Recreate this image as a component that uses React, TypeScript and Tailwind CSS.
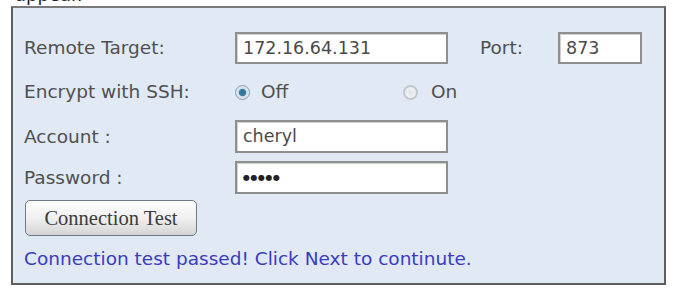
import React from "react";

const font = { fontFamily: '"DejaVu Sans", Verdana, sans-serif' };

function Field({ w, children }: { w: string; children?: React.ReactNode }) {
  return (
    <div
      className={`${w} h-full border-2 border-[#8f8f8f] bg-white shadow-[inset_1px_1px_0_#d0d0d0] flex items-center pl-[6px] text-[17.5px] text-[#4a4a4a]`}
    >
      {children}
    </div>
  );
}

export default function App() {
  return (
    <div className="w-[673px] h-[290px] bg-white overflow-hidden" style={font}>
      <div className="h-[6px] overflow-hidden pl-[15px]">
        <div className="mt-[-14px] leading-[18px] text-[18px] text-[#222]">appear.</div>
      </div>
      <div className="ml-[11px] w-[655px] h-[279px] border-2 border-[#5e5e5e] border-t-[#7a7a7a] bg-[#e0e9f4] pl-[11px] pt-[24px] text-[#505050] text-[18.5px]">
        <div className="flex items-center h-[32px]">
          <div className="w-[211px]">Remote Target:</div>
          <Field w="w-[213px]">172.16.64.131</Field>
          <div className="w-[110px] pl-[32px]">Port:</div>
          <Field w="w-[84px]">873</Field>
        </div>
        <div className="flex items-center h-[24px] mt-[16px]">
          <div className="w-[211px]">Encrypt with SSH:</div>
          <div className="flex items-center w-[168px]">
            <span className="w-[15px] h-[15px] rounded-full border border-[#8a9aa6] bg-[radial-gradient(circle,#2d6f92_0%,#3d7fa3_35%,#cfdde6_45%,#f4f7f9_100%)]" />
            <span className="ml-[11px]">Off</span>
          </div>
          <div className="flex items-center">
            <span className="w-[15px] h-[15px] rounded-full border-2 border-[#c3c7ca] bg-[radial-gradient(circle,#dfe3e6_0%,#eef1f3_60%,#d9dde0_100%)]" />
            <span className="ml-[13px]">On</span>
          </div>
        </div>
        <div className="flex items-center h-[33px] mt-[16px]">
          <div className="w-[211px]">Account&nbsp;:</div>
          <Field w="w-[213px]">cheryl</Field>
        </div>
        <div className="flex items-center h-[33px] mt-[8px]">
          <div className="w-[211px]">Password&nbsp;:</div>
          <Field w="w-[213px]">
            <span className="text-[8px] tracking-[0.5px] text-[#222]">●●●●●</span>
          </Field>
        </div>
        <div className="mt-[6px] ml-[1px] w-[172px] h-[36px] rounded-[5px] border-[1.5px] border-[#6e7b84] bg-gradient-to-b from-[#fdfdfd] via-[#f0f0f0] to-[#d4d4d4] flex items-center justify-center text-[20.5px] text-[#3c3c3c]" style={{ fontFamily: '"Liberation Serif", serif' }}>
          Connection Test
        </div>
        <div className="mt-[13px] leading-[20px] text-[#3b3bc2]">
          Connection test passed! Click Next to continute.
        </div>
      </div>
    </div>
  );
}
